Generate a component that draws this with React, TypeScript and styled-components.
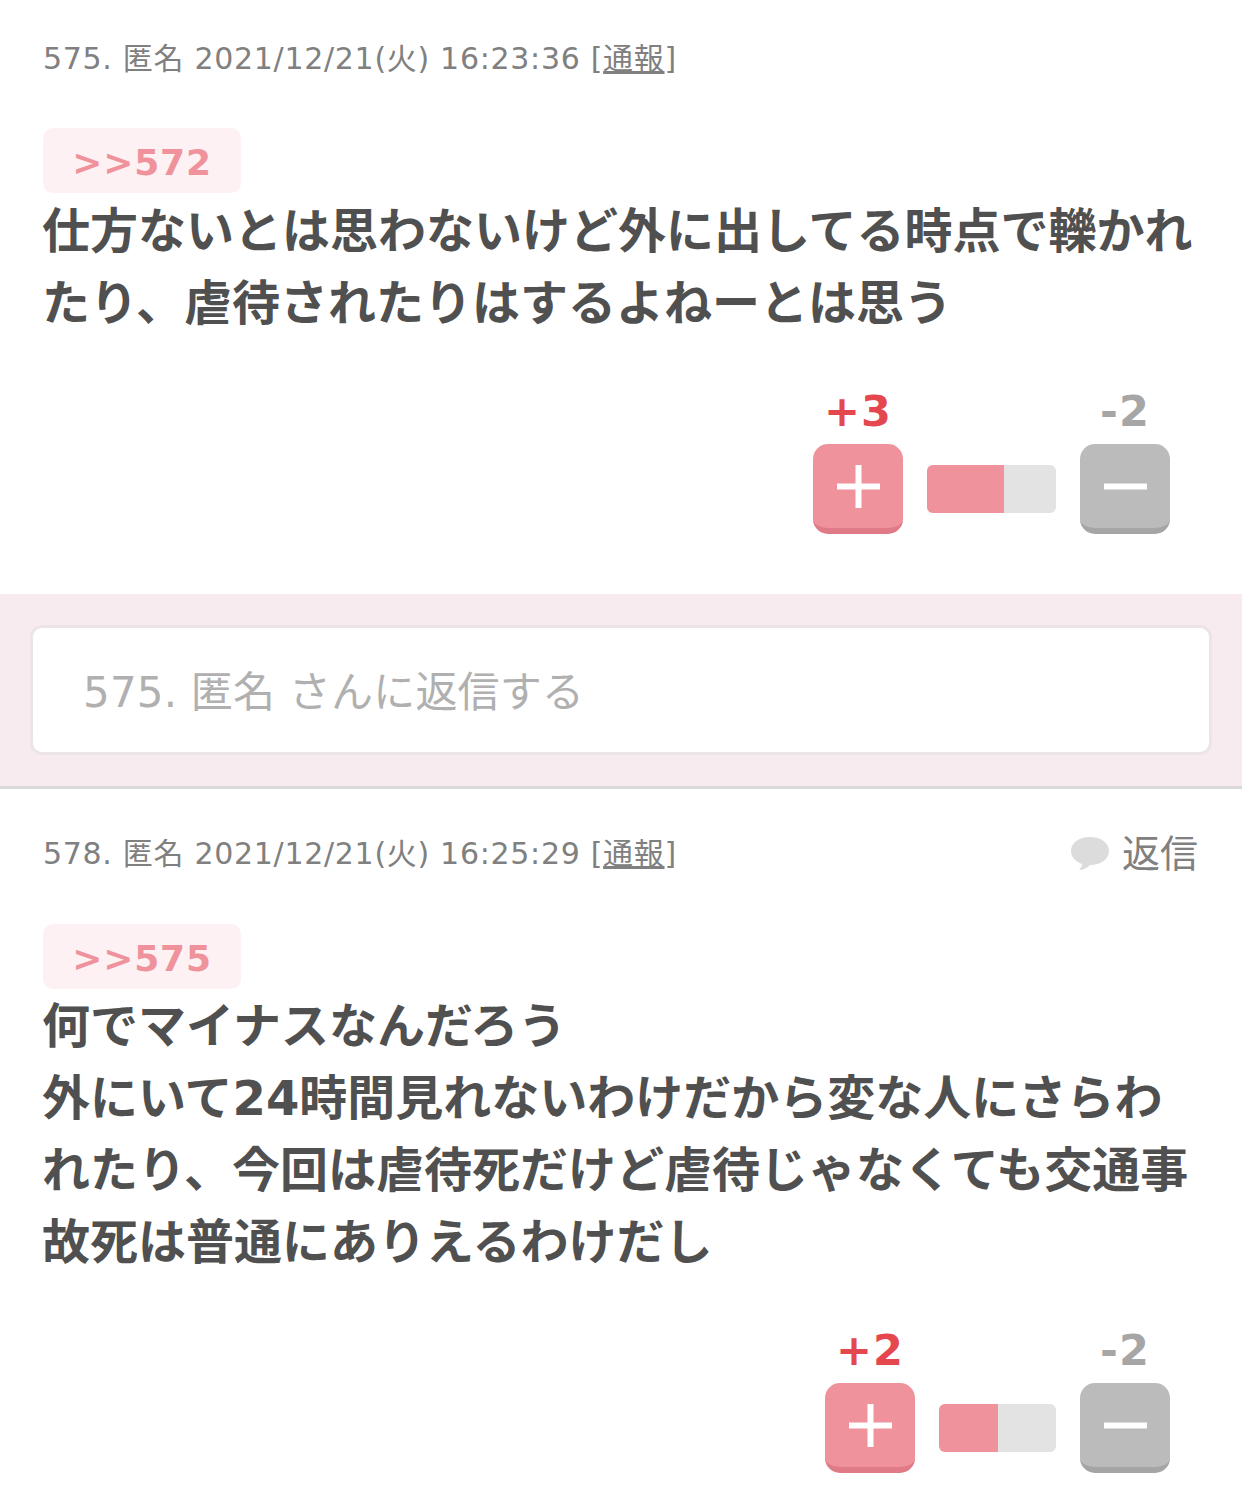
import React from "react";
import styled, { createGlobalStyle } from "styled-components";

const Global = createGlobalStyle`
  html, body { margin: 0; padding: 0; background: #fff; }
  body { font-family: "DejaVu Sans", "Noto Sans CJK JP", sans-serif; }
`;

const Page = styled.div`
  width: 1242px;
  height: 1490px;
  overflow: hidden;
  background: #fff;
  color: #555;
`;

const Comment = styled.article<{ $top: number; $bottom: number }>`
  padding: ${(p) => p.$top}px 0 ${(p) => p.$bottom}px 43px;
`;

const MetaRow = styled.div`
  display: flex;
  justify-content: space-between;
  align-items: center;
  height: 44px;
  padding-right: 44px;
`;

const Meta = styled.div`
  font-size: 30px;
  line-height: 44px;
  letter-spacing: 0.7px;
  color: #808080;
  white-space: nowrap;
`;

const ReportLink = styled.span`
  text-decoration: underline;
`;

const ReplyLink = styled.div`
  display: flex;
  align-items: center;
  gap: 12px;
  font-size: 38px;
  line-height: 44px;
  color: #808080;
`;

const Anchor = styled.div<{ $gap: number; $after: number }>`
  display: flex;
  align-items: center;
  justify-content: center;
  box-sizing: border-box;
  width: 198px;
  height: 65px;
  padding-top: 4px;
  margin-top: ${(p) => p.$gap}px;
  margin-bottom: ${(p) => p.$after}px;
  border-radius: 10px;
  background: #fdf1f3;
  color: #ef929c;
  font-size: 36px;
  font-weight: 700;
  letter-spacing: 0.8px;
`;

const Body = styled.p`
  margin: 0 0 0 -1px;
  width: 1160px;
  font-size: 48px;
  font-weight: 700;
  line-height: 72px;
  color: #505050;
`;

const Rating = styled.div<{ $gap: number }>`
  display: flex;
  justify-content: flex-end;
  align-items: flex-end;
  gap: 24px;
  margin-top: ${(p) => p.$gap}px;
  padding-right: 72px;
`;

const VoteColumn = styled.div`
  display: flex;
  flex-direction: column;
  align-items: center;
  width: 90px;
`;

const Count = styled.div<{ $up?: boolean }>`
  margin-bottom: 6px;
  font-size: 43px;
  font-weight: 700;
  line-height: 54px;
  letter-spacing: 1px;
  white-space: nowrap;
  color: ${(p) => (p.$up ? "#e5474e" : "#a6a6a6")};
`;

const VoteButton = styled.div<{ $up?: boolean }>`
  display: flex;
  align-items: center;
  justify-content: center;
  box-sizing: border-box;
  width: 90px;
  height: 90px;
  border-radius: 15px;
  background: ${(p) => (p.$up ? "#ef929c" : "#bbbbbb")};
  border-bottom: 6px solid ${(p) => (p.$up ? "#df7a86" : "#a5a5a5")};
`;

const Bar = styled.div<{ $width: number }>`
  display: flex;
  width: ${(p) => p.$width}px;
  height: 48px;
  margin-bottom: 21px;
  border-radius: 6px;
  overflow: hidden;
  background: #e3e3e3;
`;

const BarFill = styled.div`
  height: 100%;
  background: #ef929c;
`;

const ReplyBand = styled.div`
  box-sizing: border-box;
  height: 195px;
  padding: 31px 30px 32px;
  background: #f7ebef;
  border-bottom: 3px solid #d9d9d9;
`;

const ReplyBox = styled.div`
  box-sizing: border-box;
  height: 130px;
  padding: 0 0 4px 50px;
  display: flex;
  align-items: center;
  background: #fff;
  border: 3px solid #ebe5e7;
  border-radius: 12px;
  color: #b0b0b0;
  font-size: 42px;
  letter-spacing: 0.2px;
`;

const Glyph = ({ minus }: { minus?: boolean }) => (
  <svg width="43" height="43" viewBox="0 0 43 43" aria-hidden="true">
    <rect x="0" y="18.5" width="43" height="6" fill="#fff" />
    {!minus && <rect x="18.5" y="0" width="6" height="43" fill="#fff" />}
  </svg>
);

const Bubble = () => (
  <svg width="40" height="36" viewBox="0 0 40 36" aria-hidden="true">
    <path
      d="M20 1C9 1 1 7 1 15c0 6 5 11 11 13 0 2-1 4-3 6 4 0 8-2 11-5 11 0 19-6 19-14S31 1 20 1Z"
      fill="#dcdcdc"
    />
  </svg>
);

const Vote = ({ up, down, width }: { up: number; down: number; width: number }) => (
  <Rating $gap={45}>
    <VoteColumn>
      <Count $up>+{up}</Count>
      <VoteButton $up>
        <Glyph />
      </VoteButton>
    </VoteColumn>
    <Bar $width={width}>
      <BarFill style={{ width: `${(up / (up + down)) * 100}%` }} />
    </Bar>
    <VoteColumn>
      <Count>-{down}</Count>
      <VoteButton>
        <Glyph minus />
      </VoteButton>
    </VoteColumn>
  </Rating>
);

export default function App() {
  return (
    <Page>
      <Global />
      <Comment $top={37} $bottom={60}>
        <MetaRow>
          <Meta>
            575. 匿名 2021/12/21(火) 16:23:36 [<ReportLink>通報</ReportLink>]
          </Meta>
        </MetaRow>
        <Anchor $gap={47} $after={2}>&gt;&gt;572</Anchor>
        <Body>
          仕方ないとは思わないけど外に出してる時点で轢かれたり、虐待されたりはするよねーとは思う
        </Body>
        <Vote up={3} down={2} width={129} />
      </Comment>
      <ReplyBand>
        <ReplyBox>575. 匿名 さんに返信する</ReplyBox>
      </ReplyBand>
      <Comment $top={43} $bottom={0}>
        <MetaRow>
          <Meta>
            578. 匿名 2021/12/21(火) 16:25:29 [<ReportLink>通報</ReportLink>]
          </Meta>
          <ReplyLink>
            <Bubble />
            返信
          </ReplyLink>
        </MetaRow>
        <Anchor $gap={48} $after={1}>&gt;&gt;575</Anchor>
        <Body>
          何でマイナスなんだろう
          <br />
          外にいて24時間見れないわけだから変な人にさらわれたり、今回は虐待死だけど虐待じゃなくても交通事故死は普通にありえるわけだし
        </Body>
        <Vote up={2} down={2} width={117} />
      </Comment>
    </Page>
  );
}
